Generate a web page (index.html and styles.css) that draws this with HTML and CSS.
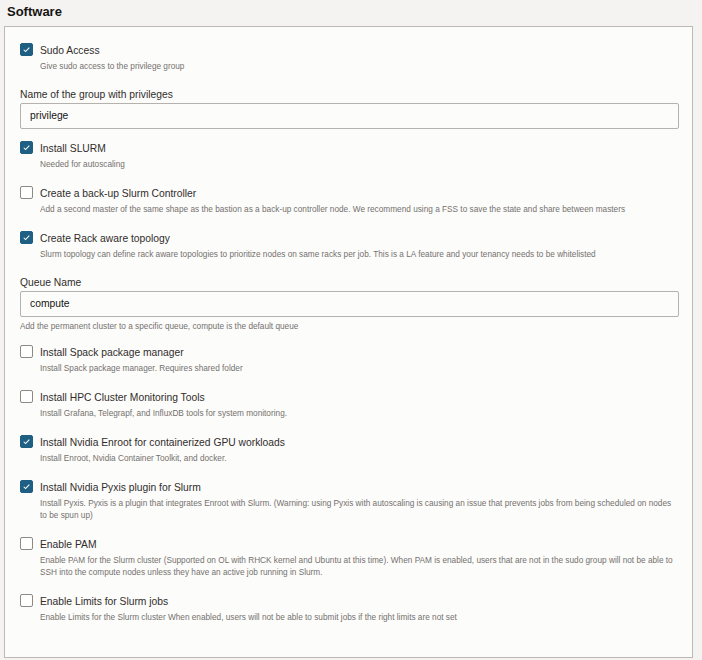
FILE: index.html
```html
<!DOCTYPE html>
<html>
<head>
<meta charset="utf-8">
<link rel="stylesheet" href="styles.css">
</head>
<body>
<div class="page">
  <h2 class="title">Software</h2>
  <div class="panel">
    <div class="cb checked">
      <div class="cb-line"><span class="box"><svg viewBox="0 0 13 13"><path d="M3.2 6.8 L5.4 9 L9.8 4.2"/></svg></span><span class="label">Sudo Access</span></div>
      <div class="desc">Give sudo access to the privilege group</div>
    </div>
    <div class="field">
      <div class="flabel">Name of the group with privileges</div>
      <div class="input">privilege</div>
    </div>
    <div class="cb checked">
      <div class="cb-line"><span class="box"><svg viewBox="0 0 13 13"><path d="M3.2 6.8 L5.4 9 L9.8 4.2"/></svg></span><span class="label">Install SLURM</span></div>
      <div class="desc">Needed for autoscaling</div>
    </div>
    <div class="cb">
      <div class="cb-line"><span class="box"></span><span class="label">Create a back-up Slurm Controller</span></div>
      <div class="desc">Add a second master of the same shape as the bastion as a back-up controller node. We recommend using a FSS to save the state and share between masters</div>
    </div>
    <div class="cb checked">
      <div class="cb-line"><span class="box"><svg viewBox="0 0 13 13"><path d="M3.2 6.8 L5.4 9 L9.8 4.2"/></svg></span><span class="label">Create Rack aware topology</span></div>
      <div class="desc">Slurm topology can define rack aware topologies to prioritize nodes on same racks per job. This is a LA feature and your tenancy needs to be whitelisted</div>
    </div>
    <div class="field">
      <div class="flabel">Queue Name</div>
      <div class="input">compute</div>
      <div class="hint">Add the permanent cluster to a specific queue, compute is the default queue</div>
    </div>
    <div class="cb">
      <div class="cb-line"><span class="box"></span><span class="label">Install Spack package manager</span></div>
      <div class="desc">Install Spack package manager. Requires shared folder</div>
    </div>
    <div class="cb">
      <div class="cb-line"><span class="box"></span><span class="label">Install HPC Cluster Monitoring Tools</span></div>
      <div class="desc">Install Grafana, Telegrapf, and InfluxDB tools for system monitoring.</div>
    </div>
    <div class="cb checked">
      <div class="cb-line"><span class="box"><svg viewBox="0 0 13 13"><path d="M3.2 6.8 L5.4 9 L9.8 4.2"/></svg></span><span class="label">Install Nvidia Enroot for containerized GPU workloads</span></div>
      <div class="desc">Install Enroot, Nvidia Container Toolkit, and docker.</div>
    </div>
    <div class="cb checked">
      <div class="cb-line"><span class="box"><svg viewBox="0 0 13 13"><path d="M3.2 6.8 L5.4 9 L9.8 4.2"/></svg></span><span class="label">Install Nvidia Pyxis plugin for Slurm</span></div>
      <div class="desc">Install Pyxis. Pyxis is a plugin that integrates Enroot with Slurm. (Warning: using Pyxis with autoscaling is causing an issue that prevents jobs from being scheduled on nodes to be spun up)</div>
    </div>
    <div class="cb">
      <div class="cb-line"><span class="box"></span><span class="label">Enable PAM</span></div>
      <div class="desc">Enable PAM for the Slurm cluster (Supported on OL with RHCK kernel and Ubuntu at this time). When PAM is enabled, users that are not in the sudo group will not be able to SSH into the compute nodes unless they have an active job running in Slurm.</div>
    </div>
    <div class="cb last">
      <div class="cb-line"><span class="box"></span><span class="label">Enable Limits for Slurm jobs</span></div>
      <div class="desc">Enable Limits for the Slurm cluster When enabled, users will not be able to submit jobs if the right limits are not set</div>
    </div>
  </div>
</div>
</body>
</html>
```

FILE: styles.css
```css
html, body {
  margin: 0;
  padding: 0;
  background: #f4f3f1;
}
body {
  font-family: "Liberation Sans", Arial, sans-serif;
  color: #312d2a;
}
.page {
  width: 689px;
  padding: 3px 0 0 4px;
}
.title {
  margin: 0 0 5px 3px;
  font-size: 13px;
  line-height: 18px;
  font-weight: bold;
  color: #161513;
}
.panel {
  background: #fcfcfb;
  border: 1px solid #bcb9b5;
  padding: 15px 14px 33px 15px;
}
.cb {
  margin-bottom: 14px;
}
.cb.last {
  margin-bottom: 0;
}
.cb-line {
  display: flex;
  align-items: center;
  height: 16px;
}
.box {
  width: 11px;
  height: 11px;
  border: 1px solid #8d8985;
  border-radius: 2px;
  background: #fff;
  margin-right: 7px;
  flex: none;
  display: flex;
  position: relative;
  top: -1px;
}
.checked .box {
  background: #1e5f83;
  border-color: #1e5f83;
}
.box svg {
  width: 11px;
  height: 11px;
}
.box path {
  fill: none;
  stroke: #fff;
  stroke-width: 1.2;
}
.label {
  font-size: 10.3px;
  color: #312d2a;
}
.desc {
  font-size: 8.25px;
  line-height: 12px;
  color: #75716d;
  padding-left: 20px;
  margin-top: 3px;
}
.hint {
  font-size: 8.25px;
  line-height: 13px;
  color: #75716d;
  margin-top: 3px;
}
.field {
  margin-bottom: 11px;
}
.flabel {
  font-size: 10.3px;
  line-height: 16px;
  color: #312d2a;
}
.input {
  height: 24px;
  border: 1px solid #b5b2ae;
  border-radius: 2px;
  background: #fcfcfb;
  font-size: 10.3px;
  line-height: 24px;
  padding-left: 9px;
  color: #161513;
  width: 648px;
}
```
